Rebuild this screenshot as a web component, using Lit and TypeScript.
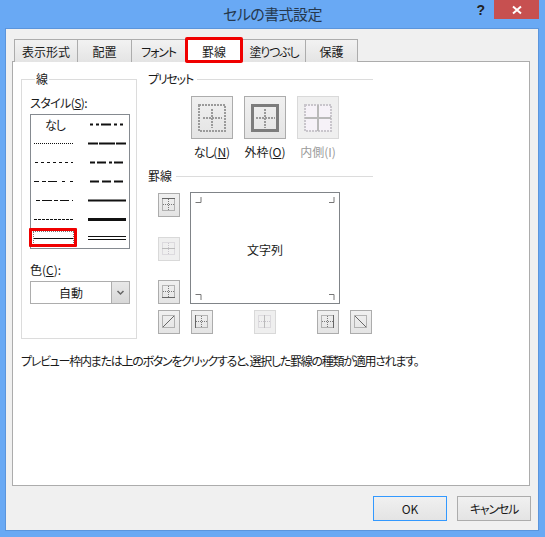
import { LitElement, html, css, svg } from "lit";
import { customElement } from "lit/decorators.js";

const dash = (x1: number, x2: number, w: number, d: string, y = 9.5, c = "#111") =>
  svg`<line x1=${x1} x2=${x2} y1=${y} y2=${y} stroke=${c} stroke-width=${w} stroke-dasharray=${d}></line>`;

const lineSvg = (w: number, body: unknown) =>
  html`<svg class="ln" width=${w} height="19" viewBox="0 0 ${w} 19">${body}</svg>`;

const DOT = "#7a7a7a";
const small = (extra: unknown, dots: unknown, color = DOT) => html`<svg width="14" height="14" viewBox="0 0 14 14">
  <g fill="none" stroke=${color} stroke-width="1" stroke-dasharray="1 1">${dots}</g>
  ${extra}
</svg>`;
const R = svg`<rect x="0.5" y="0.5" width="12" height="12"></rect>`;
const V = svg`<line x1="6.5" y1="1" x2="6.5" y2="12"></line>`;
const H = svg`<line x1="1" y1="6.5" x2="12" y2="6.5"></line>`;
const solid = (a: number, b: number, c: number, d: number, col = "#666") =>
  svg`<line x1=${a} y1=${b} x2=${c} y2=${d} stroke=${col} stroke-width="1"></line>`;

const preset = (kind: number) => html`<svg width="28" height="28" viewBox="0 0 28 28">
  ${kind === 2 ? svg`<rect x="1" y="1" width="26" height="26" fill="#f6f2f8"></rect>` : ""}
  <g fill="none" stroke=${kind === 2 ? "#c9c6cc" : "#9a9a9a"} stroke-width="2" stroke-dasharray="2 1">
    ${kind !== 1 ? svg`<rect x="1" y="1" width="26" height="26"></rect>` : ""}
    ${kind !== 2 ? svg`<line x1="14" y1="5" x2="14" y2="24"></line><line x1="5" y1="14" x2="24" y2="14"></line>` : ""}
  </g>
  ${kind === 1 ? svg`<rect x="1.5" y="1.5" width="25" height="25" fill="none" stroke="#7c7c7c" stroke-width="3"></rect>` : ""}
  ${kind === 2 ? svg`<line x1="14" y1="1" x2="14" y2="27" stroke="#b9b9b9" stroke-width="2"></line><line x1="1" y1="14" x2="27" y2="14" stroke="#b9b9b9" stroke-width="2"></line>` : ""}
</svg>`;

@customElement("app-root")
export class AppRoot extends LitElement {
  static styles = css`
    :host { display: block; width: 545px; height: 537px; background: #69a9f4; overflow: hidden;
      font: 12px "Noto Sans CJK JP", "Noto Sans", sans-serif; font-feature-settings: "palt"; color: #1a1a1a; }
    u { text-decoration: underline; text-underline-offset: 1px; }
    .k { letter-spacing: -1.2px; }
    .bar { height: 28px; display: grid; grid-template-columns: 1fr auto 1fr; }
    .title { grid-column: 2; font-size: 15px; line-height: 28px; color: #25384e; letter-spacing: -0.6px; }
    .ctrls { display: flex; justify-content: flex-end; align-items: flex-start; padding-right: 6px; }
    .help { font: bold 14px/20px "Liberation Sans", sans-serif; color: #222; margin-right: 9px; }
    .close { width: 45px; height: 19px; background: #c75050; display: flex; align-items: center; justify-content: center; }
    .dialog { margin: 0 6px 6px 5px; height: 503px; box-sizing: border-box; background: #f0f0f0; border: 1px solid #5b95dc;
      padding: 10px 8px 0 6px; }
    .tabs { display: grid; grid-template-columns: 64px 54px 54px 57px 63px 52px; margin-left: 2px; height: 22px; justify-content: start; }
    .tab { border: 1px solid #acacac; border-left: 0; border-bottom: 0; background: linear-gradient(#f2f2f2, #e4e4e4);
      display: flex; align-items: center; justify-content: center; box-sizing: border-box; position: relative; }
    .tab:first-child { border-left: 1px solid #acacac; }
    .tab.on { background: #fff; height: 23px; z-index: 1; }
    .tab.on::after { content: ""; position: absolute; inset: -3px -1px -1px -1px; border: 3px solid #f00000; border-radius: 2px; }
    .panel { height: 425px; box-sizing: border-box; background: #fff; border: 1px solid #acacac; padding: 9px 0 0 8px; }
    .top { display: flex; gap: 11px; }
    fieldset { width: 116px; height: 268px; box-sizing: border-box; margin: 0; border: 1px solid #dcdcdc; padding: 0 0 0 8px; min-width: 0; }
    legend { margin-left: 5px; padding: 0 1px; line-height: 16px; }
    .lab { line-height: 16px; }
    .lab.s { margin-top: 8px; margin-bottom: 3px; letter-spacing: -0.6px; }
    .list { width: 100px; box-sizing: border-box; border: 1px solid #858a90; display: grid; grid-template-columns: 46px 1fr; grid-auto-rows: 19px; }
    .cell { display: flex; align-items: center; padding-left: 3px; position: relative; }
    .cell.r { padding-left: 11px; }
    .cell.none { padding-left: 14px; }
    .ln { display: block; }
    .cell.sel::after { content: ""; position: absolute; left: -2px; right: 0; top: -1px; bottom: 1px; border: 3px solid #f00000; border-radius: 1px; }
    .cell.sel::before { content: ""; position: absolute; left: 2px; right: 3px; top: 2px; bottom: 3px; border: 1px dotted #777; }
    .lab.c { margin-top: 13px; margin-bottom: 3px; }
    .sel-box { width: 100px; height: 23px; box-sizing: border-box; border: 1px solid #adadad; display: flex; }
    .sel-val { flex: 1; display: flex; align-items: center; justify-content: center; }
    .sel-btn { width: 17px; background: linear-gradient(#e8e8e8, #d8d8d8); border-left: 1px solid #adadad; display: flex; align-items: center; justify-content: center; }
    .right { width: 225px; }
    .head { display: flex; align-items: center; gap: 4px; line-height: 16px; }
    .head i { flex: 1; height: 1px; background: #dcdcdc; }
    .presets { display: flex; gap: 11px; margin: 9px 0 8px 43px; }
    .pre { width: 42px; display: flex; flex-direction: column; align-items: center; gap: 5px; white-space: nowrap; line-height: 16px; }
    .btn { box-sizing: border-box; border: 1px solid #acacac; background: linear-gradient(#f0f0f0, #e4e4e4); display: flex; align-items: center; justify-content: center; }
    .btn.off { border-color: #d9d9d9; background: #efefef; }
    .pre .btn { width: 42px; height: 43px; }
    .pre.off { color: #9a9a9a; }
    .sb { width: 22px; height: 24px; }
    .grid { display: grid; grid-template-columns: 22px 150px 22px; column-gap: 10px; row-gap: 6px; margin: 8px 0 0 10px; }
    .side { display: flex; flex-direction: column; justify-content: space-between; padding-top: 1px; }
    .preview { height: 112px; box-sizing: border-box; border: 1px solid #808488; display: flex; align-items: center; justify-content: center; position: relative; padding-top: 2px; }
    .corners { position: absolute; inset: 0; }
    .bottom { display: flex; justify-content: space-between; padding-left: 1px; padding-right: 1px; }
    .desc { margin-top: 14px; line-height: 16px; letter-spacing: -1.27px; }
    .foot { display: flex; justify-content: flex-end; gap: 10px; padding-top: 10px; margin-right: -1px; }
    .act { width: 74px; height: 25px; box-sizing: border-box; border: 1px solid #acacac; background: linear-gradient(#f0f0f0, #e4e4e4);
      display: flex; align-items: center; justify-content: center; }
    .act.def { border-color: #3399ff; }
  `;

  render() {
    const tabs = [["表示形式", ""], ["配置", ""], ["フォント", "k"], ["罫線", ""], ["塗りつぶし", "k"], ["保護", ""]];
    return html`
      <div class="bar">
        <div class="title">セルの書式設定</div>
        <div class="ctrls">
          <span class="help">?</span>
          <span class="close"><svg width="10" height="10" viewBox="0 0 10 10"><path d="M1 1.5 9 8.5M9 1.5 1 8.5" stroke="#fff" stroke-width="2"/></svg></span>
        </div>
      </div>
      <div class="dialog">
        <div class="tabs">${tabs.map(([t, k], i) => html`<div class="tab ${k} ${i === 3 ? "on" : ""}">${t}</div>`)}</div>
        <div class="panel">
          <div class="top">
            <fieldset>
              <legend>線</legend>
              <div class="lab s">スタイル(<u>S</u>):</div>
              <div class="list">
                <div class="cell none k">なし</div>
                <div class="cell r">${lineSvg(38, dash(2, 35, 2, "3 3 3 2 10 3 3 3 3"))}</div>
                <div class="cell">${lineSvg(39, dash(0, 39, 1, "1 1"))}</div>
                <div class="cell r">${lineSvg(38, html`${dash(0, 38, 2, "10 1 16 1 10")}`)}</div>
                <div class="cell">${lineSvg(39, dash(1, 39, 1, "3 3"))}</div>
                <div class="cell r">${lineSvg(38, dash(2, 35, 2, "5 2 9 3 3 2 9"))}</div>
                <div class="cell">${lineSvg(39, dash(0, 39, 1, "5 3 4 2 9 5 3 5 3"))}</div>
                <div class="cell r">${lineSvg(38, dash(2, 35, 2, "9 3 9 3 9"))}</div>
                <div class="cell">${lineSvg(39, dash(2, 39, 1, "4 2 10 2 4 2 9 3 1"))}</div>
                <div class="cell r">${lineSvg(38, dash(0, 38, 2, ""))}</div>
                <div class="cell">${lineSvg(39, dash(0, 39, 1, "3 1"))}</div>
                <div class="cell r">${lineSvg(38, dash(0, 38, 3, ""))}</div>
                <div class="cell sel">${lineSvg(39, dash(0, 39, 1, ""))}</div>
                <div class="cell r">${lineSvg(38, html`${dash(0, 38, 1, "", 7.5)}${dash(0, 38, 1, "", 10.5)}`)}</div>
              </div>
              <div class="lab c">色(<u>C</u>):</div>
              <div class="sel-box">
                <div class="sel-val">自動</div>
                <div class="sel-btn"><svg width="9" height="6" viewBox="0 0 9 6"><path d="M1.5 1 4.5 4 7.5 1" fill="none" stroke="#666" stroke-width="1.5"/></svg></div>
              </div>
            </fieldset>
            <div class="right">
              <div class="head"><span class="k">プリセット</span><i></i></div>
              <div class="presets">
                <div class="pre"><div class="btn">${preset(0)}</div><span><span class="k">なし</span>(<u>N</u>)</span></div>
                <div class="pre"><div class="btn">${preset(1)}</div><span>外枠(<u>O</u>)</span></div>
                <div class="pre off"><div class="btn off">${preset(2)}</div><span>内側(I)</span></div>
              </div>
              <div class="head">罫線<i></i></div>
              <div class="grid">
                <div class="side">
                  <div class="btn sb">${small(solid(0, 0.5, 13, 0.5), svg`${R}${V}${H}`)}</div>
                  <div class="btn sb off">${small(solid(0, 6.5, 13, 6.5, "#bbb"), svg`${R}${V}`, "#c8c4cc")}</div>
                  <div class="btn sb">${small(solid(0, 12.5, 13, 12.5), svg`${R}${V}${H}`)}</div>
                </div>
                <div class="preview">
                  文字列
                  <svg class="corners" width="148" height="110" viewBox="0 0 148 110">
                    <path d="M4.5 9.5H10V4M143 4V9.5H138M4.5 101.5H10V107M143 107V101.5H138" fill="none" stroke="#777" stroke-width="1"/>
                  </svg>
                </div>
                <div></div>
                <div class="btn sb">${small(solid(1, 12, 12, 1), R)}</div>
                <div class="bottom">
                  <div class="btn sb">${small(solid(0.5, 0, 0.5, 13), svg`${R}${V}${H}`)}</div>
                  <div class="btn sb off">${small(solid(6.5, 0, 6.5, 13, "#bbb"), svg`${R}${H}`, "#c8c4cc")}</div>
                  <div class="btn sb">${small(solid(12.5, 0, 12.5, 13), svg`${R}${V}${H}`)}</div>
                </div>
                <div class="btn sb">${small(solid(1, 1, 12, 12), R)}</div>
              </div>
            </div>
          </div>
          <div class="desc">プレビュー枠内または上のボタンをクリックすると、選択した罫線の種類が適用されます。</div>
        </div>
        <div class="foot">
          <div class="act def">OK</div>
          <div class="act k">キャンセル</div>
        </div>
      </div>
    `;
  }
}
